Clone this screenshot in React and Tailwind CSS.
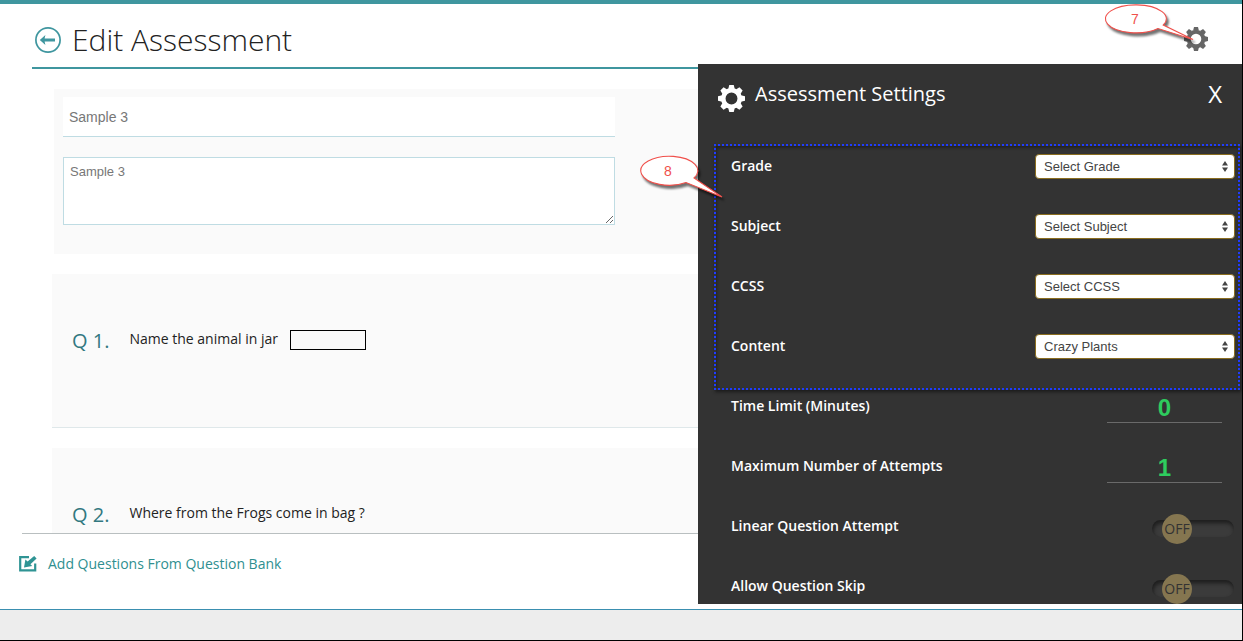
import { useState } from "react";

const selects = [
  { id: "grade", label: "Grade", options: ["Select Grade"] },
  { id: "subject", label: "Subject", options: ["Select Subject"] },
  { id: "ccss", label: "CCSS", options: ["Select CCSS"] },
  { id: "content", label: "Content", options: ["Crazy Plants"] },
];

const toggles = [
  { id: "linear", label: "Linear Question Attempt" },
  { id: "skip", label: "Allow Question Skip" },
];

function Gear({ className }) {
  return (
    <svg viewBox="-12 -12 24 24" className={className} aria-hidden="true">
      <circle r="7.3" fill="none" stroke="currentColor" strokeWidth="4" />
      {[0, 45, 90, 135, 180, 225, 270, 315].map((a) => (
        <path key={a} d="M-2.9 -8.4 L-2 -12 H2 L2.9 -8.4 Z" fill="currentColor" transform={`rotate(${a})`} />
      ))}
    </svg>
  );
}

function BackIcon() {
  return (
    <svg viewBox="0 0 26 26" className="size-[26px]" aria-hidden="true">
      <circle cx="13" cy="13" r="12.1" fill="none" stroke="#3f969f" strokeWidth="1.7" />
      <path d="M4.8 13 L10.4 8 L9.6 11.4 H20 V14.6 H9.6 L10.4 18 Z" fill="#3f969f" />
    </svg>
  );
}

function AddIcon() {
  return (
    <svg viewBox="0 0 18 16" className="w-[18px] h-4" aria-hidden="true">
      <path d="M10 1.2 H1.2 V14.4 H16.2 V7.5" fill="none" stroke="#2f9494" strokeWidth="2.2" />
      <path d="M15.2 0 L17.6 2.4 L11.4 8.2 L13.2 10 L5 11.4 L6.4 3.4 L8.6 5.6 Z" fill="#2f9494" />
    </svg>
  );
}

function Callout({ number, path, textX, className }) {
  return (
    <svg viewBox="0 0 100 52" className={`absolute z-10 w-[100px] h-[52px] pointer-events-none overflow-visible ${className}`}>
      <path
        d={path}
        fill="#fff"
        stroke="#f0504b"
        strokeWidth="1.1"
        className="drop-shadow-[2px_3px_1px_rgba(0,0,0,0.55)]"
      />
      <text x={textX} y="20" textAnchor="middle" fontSize="14" fill="#f0504b" fontFamily="Liberation Sans, sans-serif">
        {number}
      </text>
    </svg>
  );
}

function Question({ number, className, children }) {
  return (
    <div className={`flex shrink-0 gap-5 bg-[#fafafa] pl-5 ml-5 border-b border-[#dfe8ea] ${className}`}>
      <span className="text-xl leading-7 text-[#327880]">Q {number}.</span>
      <div className="text-sm leading-6 text-[#222]">{children}</div>
    </div>
  );
}

function Row({ id, label, children }) {
  return (
    <div className="flex h-[60px] items-start justify-between">
      <label htmlFor={id} className="text-sm leading-6 font-semibold">{label}</label>
      {children}
    </div>
  );
}

function SelectRow({ id, label, options }) {
  return (
    <Row id={id} label={label}>
      <div className="relative w-[200px]">
        <select
          id={id}
          className="block w-full h-[25px] appearance-none rounded border border-[#8a6d1f] bg-white px-2 text-[13px] text-[#444] font-['Liberation_Sans',sans-serif]"
        >
          {options.map((o) => (
            <option key={o}>{o}</option>
          ))}
        </select>
        <svg viewBox="0 0 6 11" className="absolute right-[7px] top-[7px] w-[6px] h-[11px] pointer-events-none" aria-hidden="true">
          <path d="M0 4.5 L3 0 L6 4.5 Z M0 6.5 L3 11 L6 6.5 Z" fill="#444" />
        </svg>
      </div>
    </Row>
  );
}

function NumberRow({ id, label, value }) {
  return (
    <Row id={id} label={label}>
      <input
        id={id}
        type="text"
        inputMode="numeric"
        defaultValue={value}
        className="w-[115px] h-[29px] mr-3 border-b border-[#6a6a6a] bg-transparent text-center text-2xl font-bold text-[#2ecc5e] font-['Liberation_Sans',sans-serif] outline-none"
      />
    </Row>
  );
}

function ToggleRow({ id, label }) {
  const [on, setOn] = useState(false);

  return (
    <Row id={id} label={label}>
      <button
        id={id}
        type="button"
        role="switch"
        aria-checked={on}
        onClick={() => setOn(!on)}
        className={`flex w-[82px] h-[17px] mt-[6px] items-center rounded-full bg-[#3b3b3b] px-[10px] shadow-[inset_1px_3px_4px_#1c1c1c] ${on ? "justify-end" : ""}`}
      >
        <span className="flex size-[30px] shrink-0 items-center justify-center rounded-full bg-[#857650] text-sm text-[#333]">
          {on ? "ON" : "OFF"}
        </span>
      </button>
    </Row>
  );
}

function Editor() {
  return (
    <main className="flex min-w-0 flex-1 flex-col">
      <header className="ml-8 flex h-[65px] shrink-0 items-center gap-[11px] border-b-2 border-[#3f969f] pl-[3px] pt-2">
        <button type="button" aria-label="Back"><BackIcon /></button>
        <h1 className="text-3xl leading-10 font-light text-[#222]">Edit Assessment</h1>
      </header>

      <div className="ml-8 mt-5 flex min-h-0 flex-1 flex-col overflow-hidden">
        <div className="ml-[22px] flex h-[165px] shrink-0 flex-col gap-5 bg-[#fafafa] px-[9px] pt-2 font-['Liberation_Sans',sans-serif] text-[#777]">
          <input
            aria-label="Title"
            defaultValue="Sample 3"
            className="w-full max-w-[552px] h-10 shrink-0 border-b border-[#bfdce3] bg-white px-[6px] text-sm outline-none"
          />
          <textarea
            aria-label="Description"
            defaultValue="Sample 3"
            className="w-full max-w-[552px] h-[68px] border border-[#bfdce3] bg-white px-[6px] py-1 text-[13px] leading-5 outline-none"
          />
        </div>

        <Question number={1} className="mt-5 h-[154px] pt-[53px]">
          <label htmlFor="answer">Name the animal in jar</label>
          <input id="answer" className="ml-3 w-[76px] h-5 border border-black bg-transparent align-middle" />
        </Question>
        <Question number={2} className="mt-5 h-[154px] pt-[53px]">
          Where from the Frogs come in bag ?
        </Question>
      </div>

      <div className="ml-[22px] h-[71px] shrink-0 border-t border-[#b9bfc0] pt-[18px]">
        <a href="#bank" className="-ml-[3px] flex items-center gap-[11px] text-sm leading-6 text-[#2f8f90]">
          <AddIcon />
          Add Questions From Question Bank
        </a>
      </div>
    </main>
  );
}

function Settings() {
  return (
    <aside className="relative flex w-[544px] shrink-0 flex-col">
      <div className="flex h-[60px] shrink-0 items-start justify-end pr-[34px] pt-[23px]">
        <button type="button" aria-label="Settings" className="text-[#666]"><Gear className="size-6" /></button>
      </div>
      <Callout
        number="7"
        textX="29"
        className="left-[408px] top-0"
        path="M52 24.5 A30.5 14 0 1 1 57.3 21 L87 35.5 Z"
      />
      <Callout
        number="8"
        textX="28"
        className="-left-[58px] top-[152px]"
        path="M46 26.5 A28.5 14.5 0 1 1 54 22 L82 41 Z"
      />

      <section className="min-h-0 flex-1 overflow-hidden bg-[#333] text-white">
        <div className="flex h-20 items-start pl-5 pr-5 pt-[14px]">
          <Gear className="mt-[7px] size-[27px]" />
          <h2 className="ml-[10px] flex-1 text-xl leading-8 font-medium">Assessment Settings</h2>
          <button type="button" aria-label="Close" className="text-2xl leading-8 font-medium">X</button>
        </div>
        <div className="ml-4 mr-[2px] h-[246px] border-2 border-dotted border-[#1f3cff] pl-[15px] pr-[3px] pt-2 shadow-[1px_2px_3px_#1c1c1c,inset_1px_2px_3px_#222]">
          {selects.map((s) => (
            <SelectRow key={s.id} {...s} />
          ))}
        </div>
        <div className="pl-[33px] pr-2 pt-1">
          <NumberRow id="limit" label="Time Limit (Minutes)" value="0" />
          <NumberRow id="attempts" label="Maximum Number of Attempts" value="1" />
          {toggles.map((t) => (
            <ToggleRow key={t.id} {...t} />
          ))}
        </div>
      </section>
    </aside>
  );
}

export default function App() {
  return (
    <div className="flex h-screen flex-col border-r border-b border-black bg-white font-['Open_Sans',sans-serif]">
      <div className="h-1 shrink-0 bg-[#3f969f]" />
      <div className="flex min-h-0 flex-1 pb-[5px]">
        <Editor />
        <Settings />
      </div>
      <footer className="h-[31px] shrink-0 border-t border-[#3a8fb0] bg-[#ededed]" />
    </div>
  );
}
